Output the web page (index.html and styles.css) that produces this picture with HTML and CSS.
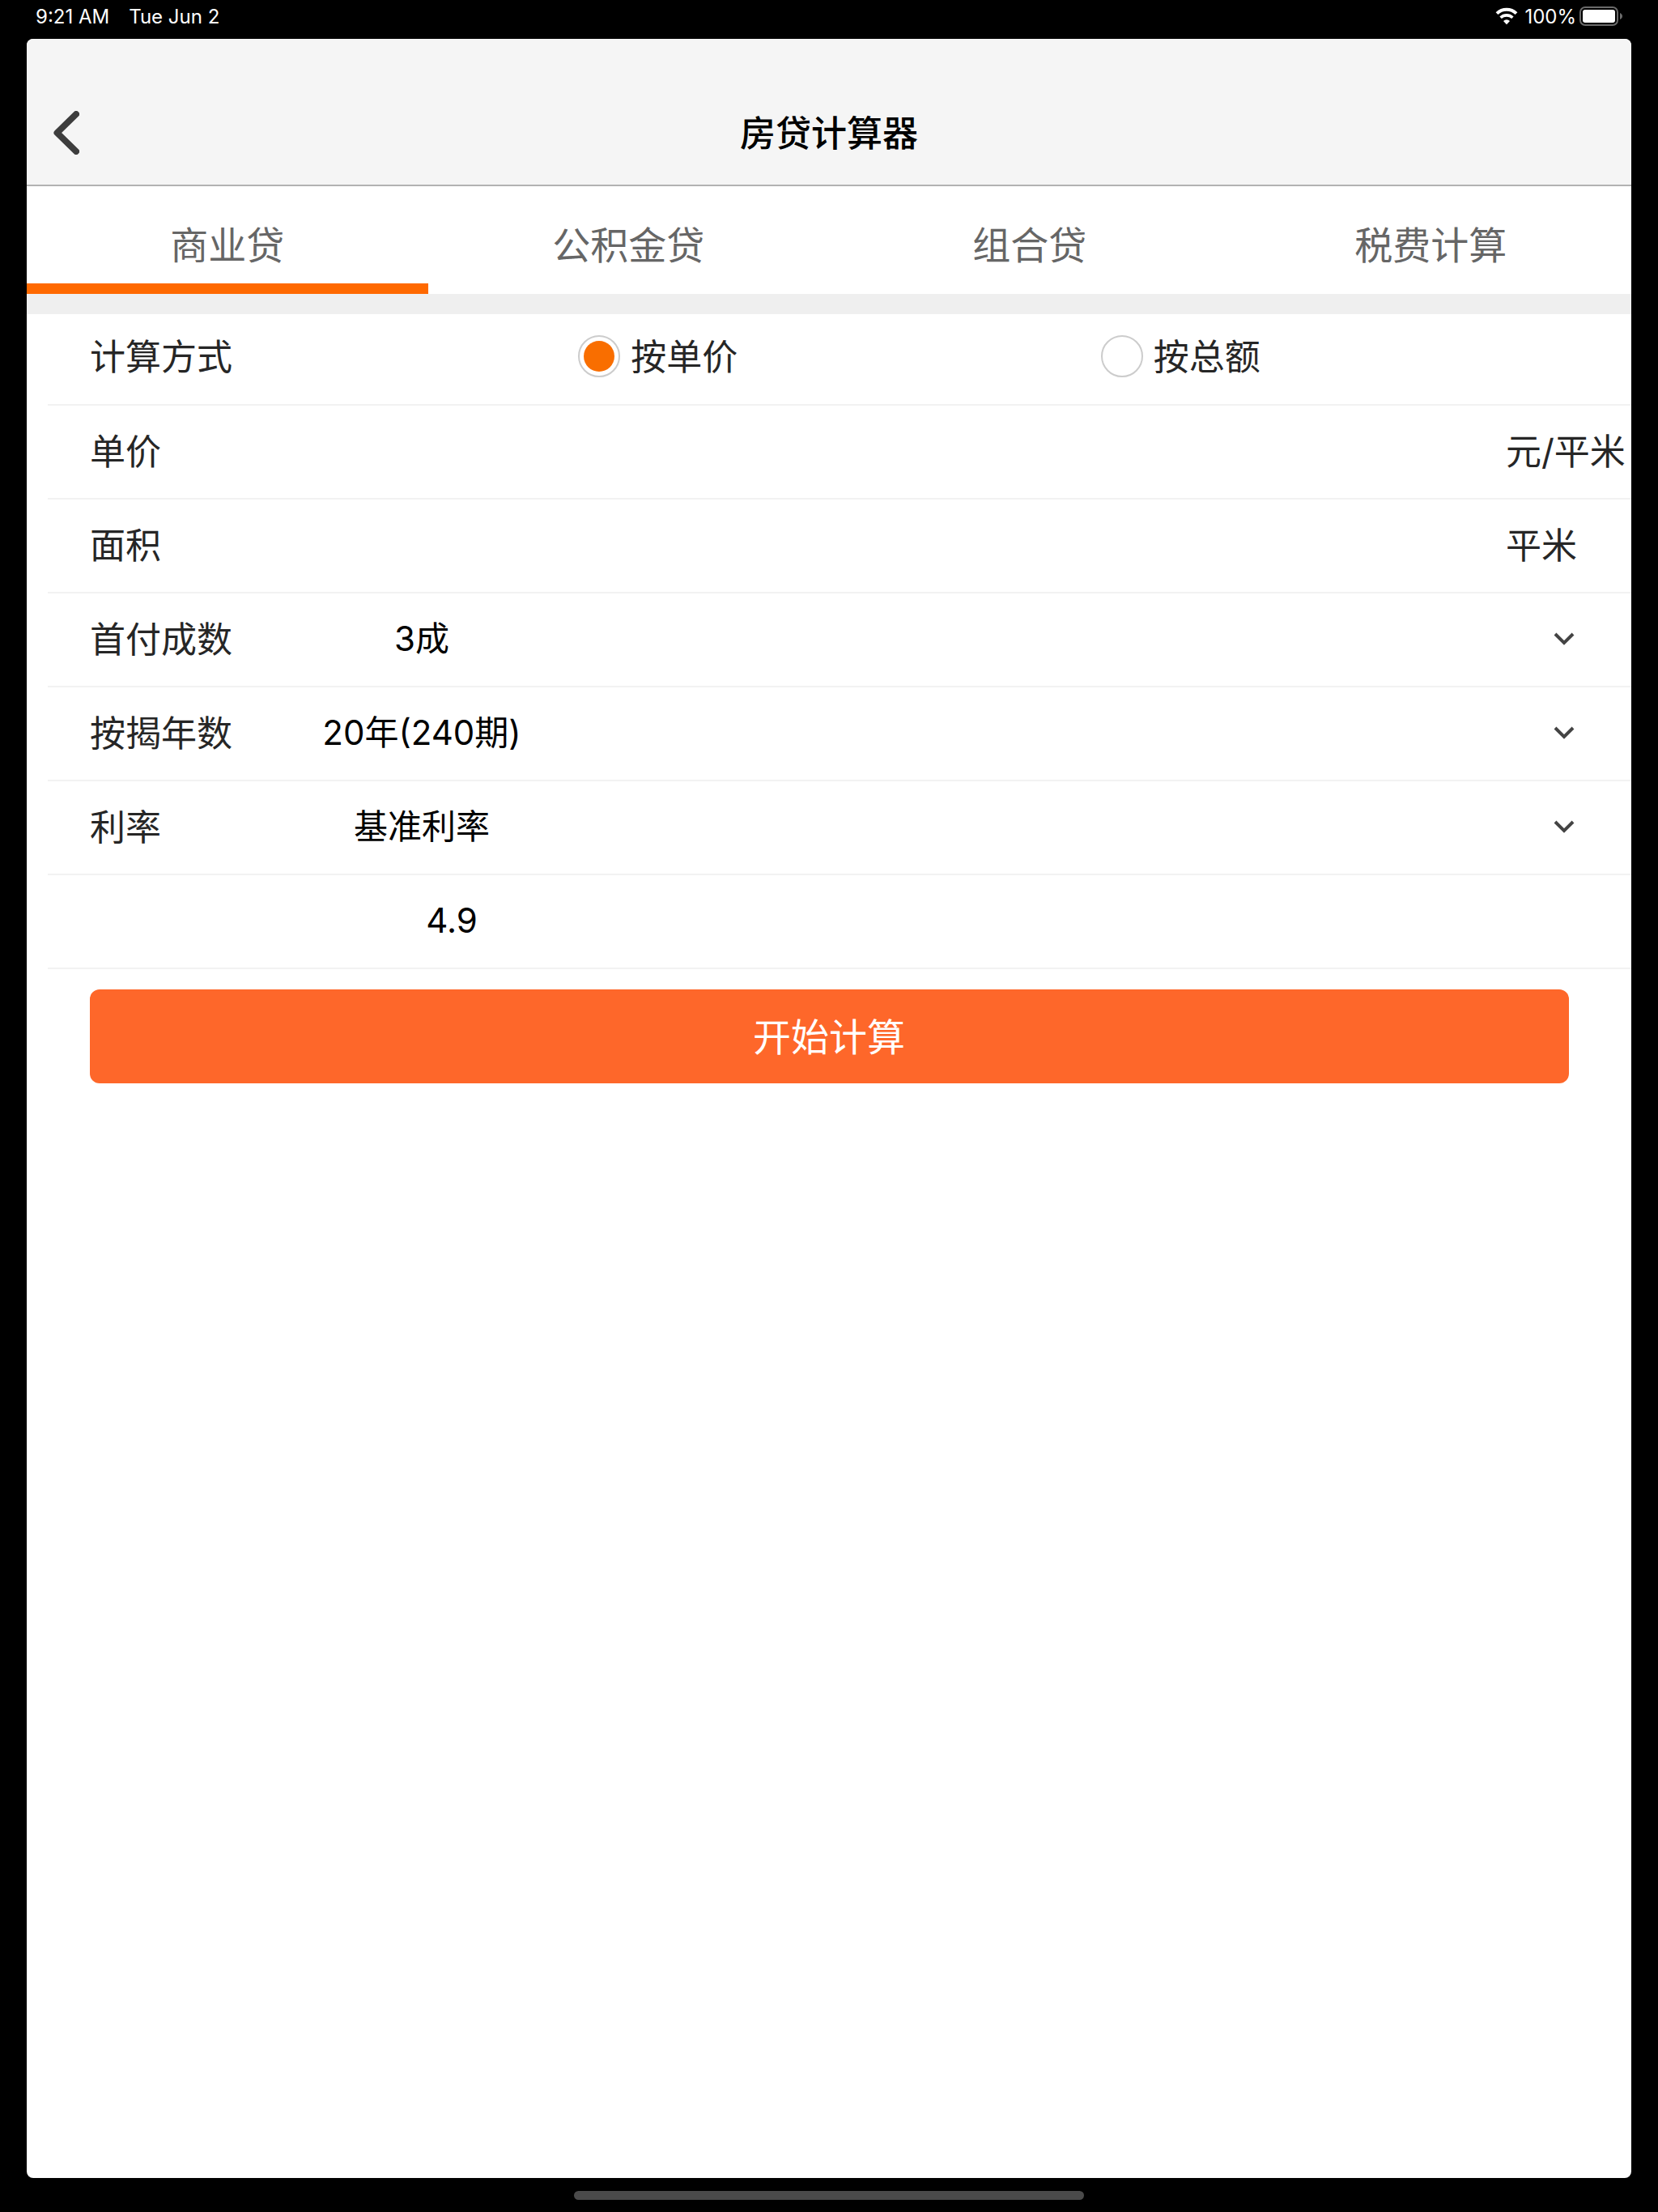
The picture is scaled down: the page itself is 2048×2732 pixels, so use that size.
FILE: index.html
```html
<!DOCTYPE html>
<html lang="zh-CN">
<head>
    <meta charset="UTF-8">
    <meta name="viewport" content="width=device-width, initial-scale=1.0">
    <title>房贷计算器</title>
    <link rel="stylesheet" href="styles.css">
</head>
<body>
    <div class="status-bar">
        <span class="time">9:21 AM</span>
        <span class="date">Tue Jun 2</span>
        <div class="status-icons">
            <svg class="wifi" viewBox="0 0 28 22" fill="none" stroke="#fff">
                <path d="M2 7.6a17.4 17.4 0 0 1 24 0" stroke-width="4"/>
                <path d="M6.6 12.8a10.8 10.8 0 0 1 14.8 0" stroke-width="3.6"/>
                <path d="M14 21.2l-4-4.200a5.6 5.6 0 0 1 8 0z" fill="#fff" stroke="none"/>
            </svg>
            <span>100%</span>
            <svg class="battery" viewBox="0 0 54 24">
                <rect x="1" y="1" width="46" height="22" rx="6" fill="none" stroke="#6b6b6b" stroke-width="2"/>
                <rect x="4" y="4" width="40" height="16" rx="3" fill="#fff"/>
                <path d="M50 8c4 1.500 4 6.500 0 8z" fill="#6b6b6b"/>
            </svg>
        </div>
    </div>

    <div class="screen">
        <header class="header">
            <button type="button" class="back" aria-label="返回">
                <svg viewBox="0 0 32 54" fill="none" stroke="#3d3d3d" stroke-width="8" stroke-linecap="round" stroke-linejoin="round">
                    <path d="M28 4L4.500 27L28 50"/>
                </svg>
            </button>
            <h1>房贷计算器</h1>
        </header>

        <nav class="tabs">
            <a href="#commercial" class="tab active">商业贷</a>
            <a href="#fund" class="tab">公积金贷</a>
            <a href="#combined" class="tab">组合贷</a>
            <a href="#tax" class="tab">税费计算</a>
        </nav>

        <form id="loanForm" class="form">
            <div class="row method" role="radiogroup" aria-labelledby="methodLabel">
                <span class="label" id="methodLabel">计算方式</span>
                <label class="option"><input type="radio" name="method" value="unit" checked><span>按单价</span></label>
                <label class="option"><input type="radio" name="method" value="total"><span>按总额</span></label>
            </div>
            <div class="row">
                <label class="label" for="price">单价</label>
                <input type="text" class="wide" id="price" name="price">
                <span class="unit">元/平米</span>
            </div>
            <div class="row">
                <label class="label" for="area">面积</label>
                <input type="text" class="wide" id="area" name="area">
                <span class="unit">平米</span>
            </div>
            <div class="row">
                <label class="label" for="downPayment">首付成数</label>
                <select id="downPayment" name="downPayment">
                    <option>3成</option>
                </select>
                <svg class="arrow" viewBox="0 0 26 16"><path d="M2 2l11 11L24 2"/></svg>
            </div>
            <div class="row">
                <label class="label" for="years">按揭年数</label>
                <select id="years" name="years">
                    <option>20年(240期)</option>
                </select>
                <svg class="arrow" viewBox="0 0 26 16"><path d="M2 2l11 11L24 2"/></svg>
            </div>
            <div class="row">
                <label class="label" for="rateType">利率</label>
                <select id="rateType" name="rateType">
                    <option>基准利率</option>
                </select>
                <svg class="arrow" viewBox="0 0 26 16"><path d="M2 2l11 11L24 2"/></svg>
            </div>
            <div class="row">
                <span class="label"></span>
                <input type="text" class="rate" name="rate" value="4.9" aria-label="利率">
            </div>
            <button type="submit" class="submit">开始计算</button>
        </form>
    </div>

    <div class="home-indicator"></div>
</body>
</html>
```

FILE: styles.css
```css
* {
    box-sizing: border-box;
}
body {
    margin: 0;
    min-height: 100vh;
    display: flex;
    flex-direction: column;
    background-color: #000;
    font-family: Inter, 'Noto Sans CJK SC', sans-serif;
    font-size: 44px;
    color: #262626;
}
input, select, button {
    font-family: inherit;
    margin: 0;
    padding: 0;
    border: none;
    background: none;
}

/* Status bar */
.status-bar {
    display: flex;
    align-items: center;
    height: 48px;
    padding: 0 43px 8px 44px;
    color: #fff;
    font-size: 24px;
}
.date {
    margin-left: 24px;
}
.status-icons {
    display: flex;
    align-items: center;
    margin-left: auto;
}
.wifi {
    width: 28px;
    height: 22px;
    margin-right: 8px;
}
.battery {
    width: 54px;
    height: 24px;
    margin-left: 4px;
}

.screen {
    flex: 1;
    margin: 0 33px;
    border-radius: 8px;
    background-color: #fff;
    overflow: hidden;
}

/* Header */
.header {
    display: grid;
    grid-template-columns: 1fr auto 1fr;
    align-items: center;
    height: 182px;
    padding: 52px 33px 0;
    background-color: #f5f5f5;
    border-bottom: 2px solid #b2b2b2;
}
.header h1 {
    margin: 0;
    padding-bottom: 4px;
    color: #000;
    font-size: 44px;
    font-weight: 500;
}
.back {
    justify-self: start;
    display: flex;
    cursor: pointer;
}
.back svg {
    width: 32px;
    height: 54px;
}

/* Tabs */
.tabs {
    display: flex;
    border-bottom: 25px solid #efefef;
}
.tab {
    flex: 1;
    display: flex;
    align-items: center;
    justify-content: center;
    height: 133px;
    padding-top: 18px;
    border-bottom: 13px solid transparent;
    color: #666;
    font-size: 47px;
    text-decoration: none;
}
.tab.active {
    border-bottom-color: #ff6900;
}

/* Form rows */
.row {
    display: flex;
    align-items: center;
    height: 116px;
    margin-left: 26px;
    padding-bottom: 3px;
    border-bottom: 2px solid #f2f2f2;
}
.label, .unit, .option span {
    padding-bottom: 4px;
}
.label {
    width: 302px;
    padding-left: 52px;
}
.row select, .row input[type="text"] {
    height: 100%;
    color: #000;
    font-size: 42px;
    text-align: center;
    outline: none;
}
.row select {
    width: 320px;
    appearance: none;
    text-align-last: center;
}
.row .wide {
    flex: 1;
    min-width: 0;
}
.row .rate {
    width: 394px;
}
.unit {
    width: 155px;
    white-space: nowrap;
}
.arrow {
    width: 26px;
    height: 16px;
    margin-left: auto;
    margin-right: 70px;
    fill: none;
    stroke: #444;
    stroke-width: 4;
}
.method {
    display: grid;
    grid-template-columns: 33.5% 33% 1fr;
    height: 113px;
    padding-bottom: 8px;
}
.option {
    display: flex;
    align-items: center;
    gap: 13px;
}
.option input {
    appearance: none;
    width: 52px;
    height: 52px;
    border: 2px solid #ccc;
    border-radius: 50%;
}
.option input:checked {
    padding: 5px;
    background-color: #f96e00;
    background-clip: content-box;
}
.submit {
    display: block;
    width: calc(100% - 155px);
    height: 116px;
    margin: 25px auto;
    padding-bottom: 5px;
    border-radius: 12px;
    background-color: #fe672a;
    color: #fff;
    font-size: 47px;
    cursor: pointer;
}

.home-indicator {
    width: 630px;
    max-width: 60%;
    height: 11px;
    margin: 16px auto 15px;
    border-radius: 6px;
    background-color: #4a4a4a;
}
```
